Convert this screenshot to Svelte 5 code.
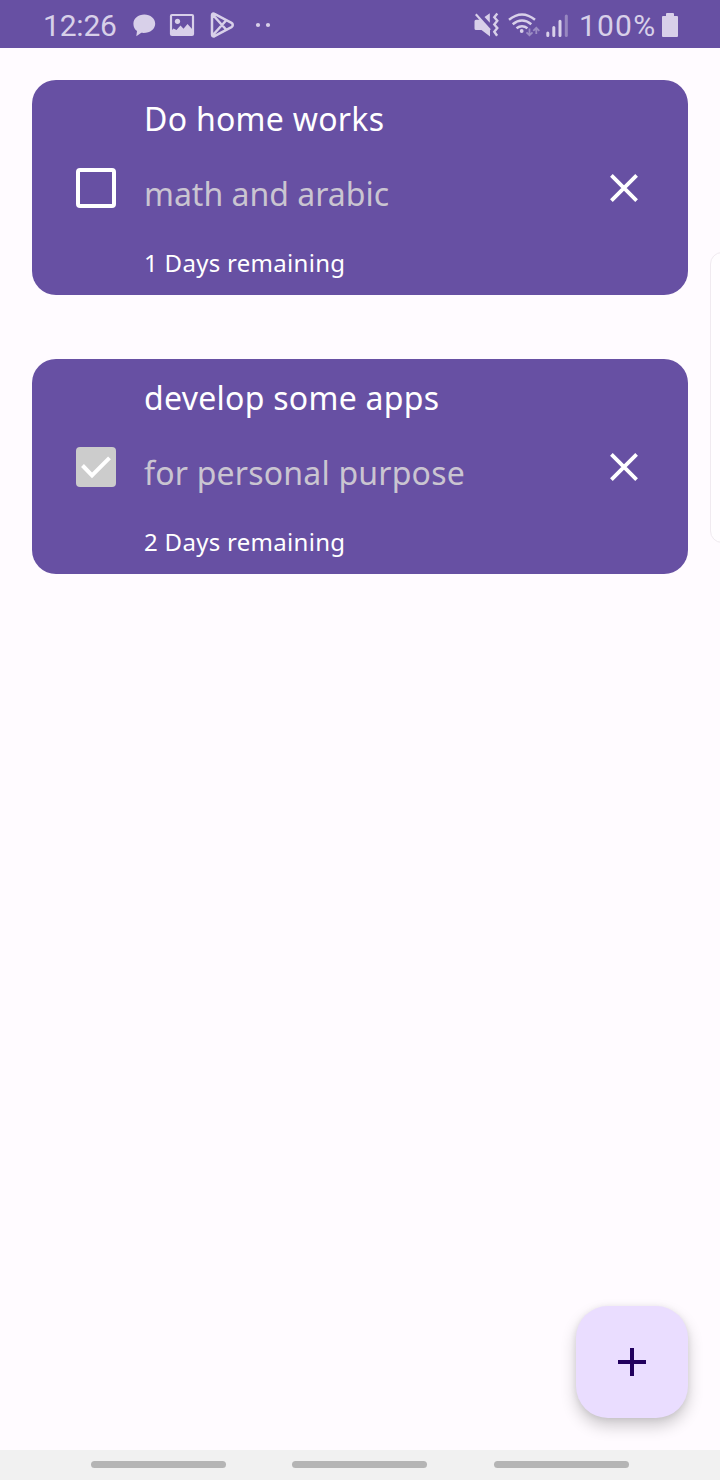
<script>
  let tasks = $state([
    { title: 'Do home works', note: 'math and arabic', days: 1, done: false, spacing: [0.28, 0, 0.3] },
    { title: 'develop some apps', note: 'for personal purpose', days: 2, done: true, spacing: [0.28, 0.2, 0.3] }
  ]);
</script>

<div class="screen">
  <header>
    <span class="clock">12:26</span>
    <svg class="notifications" width="144" height="48" viewBox="130 0 144 48" fill="none" stroke="#d8d0e9">
      <path d="M144.300 14.500c-6.200 0-10.900 4-10.900 9.200 0 3.200 1.300 5.700 3.600 7.400l-.7 5.200 5-3.500c8.200.9 13.900-3.500 13.900-9.100 0-5.200-4.700-9.200-10.900-9.200Z" fill="#d8d0e9" stroke="none" />
      <rect x="171" y="15" width="22" height="20" rx="1" stroke-width="2.200" />
      <circle cx="177.500" cy="21.300" r="2.600" fill="#d8d0e9" stroke="none" />
      <path d="M171 31l2.500-2.500 3 1.500 4-4.500 3 3.300 4-4.800 5.500 6v5h-22Z" fill="#d8d0e9" stroke="none" />
      <path d="M212 15v19.500c0 1.600 1.200 2.400 2.500 1.600l17-9c1.700-1 1.700-3.200 0-4.200l-17-9c-1.300-.8-2.500-.3-2.500 1.100ZM212.500 14.500 226.500 30M212.500 35.500 226.500 20" stroke-width="2.500" stroke-linejoin="round" />
      <circle cx="258" cy="25" r="2.100" fill="#d8d0e9" stroke="none" />
      <circle cx="268" cy="25" r="2.100" fill="#d8d0e9" stroke="none" />
    </svg>
    <svg class="signals" width="98" height="48" viewBox="472 0 98 48" fill="none" stroke="#d8d0e9">
      <path d="M476 19.800h5L490 30V36.500L481.500 30H476q-1.500 0-1.500-1.500V21.300q0-1.500 1.500-1.500ZM484.500 17 489.800 13.200v9.500Z" fill="#d8d0e9" stroke="none" />
      <path d="M475.800 14.200 490 30" stroke-width="2.200" />
      <path d="m497.300 13.500-3 3.700 3 3.600-3 3.700 3 3.600-3 3.700 2.800 4" stroke-width="2.400" />
      <path d="M509 19.700q13-10.500 26 0M512.700 24.200q9.300-7.500 18.600 0M516.500 28.300q5.500-4.200 11 0" stroke-width="2.500" />
      <circle cx="521.700" cy="31" r="1.900" fill="#d8d0e9" stroke="none" />
      <path d="M529.500 28.500V35m-3-2.700 3 3 3-3M536.300 34V28m-3 2.800 3-3 3 3" stroke="#9c8dc4" stroke-width="1.800" />
      <path d="M547.800 33V35.500M553.800 27.500V35.500M560 21.300V35.500" stroke-width="3" stroke-linecap="round" />
      <path d="M566.300 16V35.500" stroke="#9888c1" stroke-width="3" stroke-linecap="round" />
    </svg>
    <span class="percent">100%</span>
    <svg class="battery" width="16" height="48" viewBox="662 0 16 48">
      <path d="M666 16v-2q0-1 1-1h6q1 0 1 1v2h3q1 0 1 1v19q0 1-1 1h-14q-1 0-1-1V17q0-1 1-1Z" fill="#d8d0e9" />
    </svg>
  </header>

  <main>
    {#each tasks as task}
      <article>
        <button class="check" class:done={task.done} aria-label="Done" onclick={() => (task.done = !task.done)}>
          {#if task.done}
            <svg width="40" height="40" viewBox="0 0 40 40"><path d="m6.500 18.500 9.500 9.800 17.500-17.500" fill="none" stroke="#fff" stroke-width="4" /></svg>
          {/if}
        </button>
        <div class="text">
          <h2 style:letter-spacing="{task.spacing[0]}px">{task.title}</h2>
          <p class="note" style:letter-spacing="{task.spacing[1]}px">{task.note}</p>
          <p class="days" style:letter-spacing="{task.spacing[2]}px">{task.days} Days remaining</p>
        </div>
        <button class="remove" aria-label="Remove">
          <svg width="28" height="28" viewBox="0 0 28 28"><path d="m1.400 1.400 25.200 25.200m0-25.200L1.400 26.600" stroke="#fff" stroke-width="3.800" /></svg>
        </button>
      </article>
    {/each}
  </main>

  <div class="edge-panel"></div>
  <button class="add" aria-label="Add">
    <svg width="28" height="28" viewBox="0 0 28 28"><path d="M14 0v28M0 14h28" stroke="#21005d" stroke-width="4" /></svg>
  </button>
  <footer><i></i><i></i><i></i></footer>
</div>

<style>
  .screen {
    position: relative;
    display: flex;
    flex-direction: column;
    width: 720px;
    height: 1480px;
    overflow: hidden;
    background: #fffbff;
    font-family: "Noto Sans", sans-serif;
  }
  header {
    display: flex;
    height: 48px;
    background: #6750a3;
    color: #d8d0e9;
    font: 30px/52px Roboto, sans-serif;
  }
  header svg { flex: none; }
  .clock { width: 87px; margin-left: 43px; letter-spacing: -0.2px; white-space: nowrap; }
  .signals { margin-left: 198px; }
  .percent { width: 83px; margin-left: 9px; letter-spacing: 1.2px; white-space: nowrap; }
  main {
    flex: 1;
    display: flex;
    flex-direction: column;
    gap: 64px;
    padding: 32px;
  }
  article {
    display: flex;
    align-items: center;
    box-sizing: border-box;
    height: 215px;
    padding: 0 50px 0 44px;
    border-radius: 24px;
    background: #6750a3;
    color: #fff;
  }
  button { padding: 0; border: 0; background: none; }
  svg { display: block; }
  .check {
    box-sizing: border-box;
    width: 40px;
    height: 40px;
    border: 4px solid #fff;
    border-radius: 4px;
  }
  .check.done { border: 0; background: #ccc; }
  .text { flex: 1; margin-left: 28px; white-space: nowrap; }
  h2, p { margin: 0; font-weight: 400; }
  h2 { font-size: 32px; line-height: 48px; }
  .note { margin-top: 27px; font-size: 32px; line-height: 48px; color: #cac5d1; }
  .days { margin: 29px 0 1px; font-size: 24px; line-height: 32px; }
  .edge-panel {
    position: absolute;
    left: 710px;
    top: 252px;
    width: 24px;
    height: 289px;
    border: 1px solid #f0eaf0;
    border-radius: 12px;
    background: #fffdff;
  }
  .add {
    position: absolute;
    right: 32px;
    bottom: 62px;
    display: grid;
    place-items: center;
    width: 112px;
    height: 112px;
    border-radius: 32px;
    background: #eaddff;
    box-shadow: 0 8px 16px rgba(0, 0, 0, 0.2), 0 1px 6px rgba(0, 0, 0, 0.08);
  }
  footer {
    display: flex;
    align-items: center;
    gap: 66.400px;
    height: 29px;
    padding: 0 0 1px 91px;
    background: #f1f1f1;
  }
  footer i { width: 135px; height: 7px; border-radius: 4px; background: #b5b5b5; }
</style>
